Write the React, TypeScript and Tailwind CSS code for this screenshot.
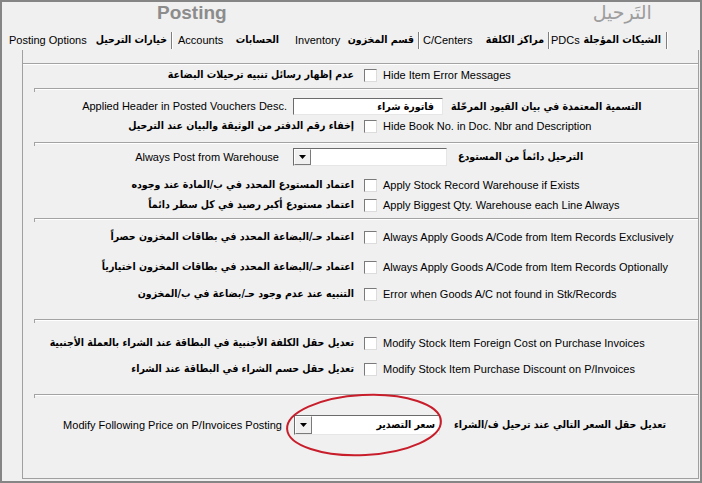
const en = "font-['Liberation_Sans','DejaVu_Sans',sans-serif] text-[11px] text-black whitespace-nowrap";
const ar = "font-['DejaVu_Sans_Condensed','DejaVu_Sans',sans-serif] font-stretch-condensed font-bold text-[10.5px] text-black whitespace-nowrap";

function Check() {
  return (
    <span className="block w-[13px] h-[13px] shrink-0 bg-white border border-t-[#7a7a7a] border-l-[#7a7a7a] border-r-[#dcdcdc] border-b-[#dcdcdc]" />
  );
}

function Etched({ full, className = "" }: { full?: boolean; className?: string }) {
  return (
    <div className={`relative h-[2px] border-t border-t-[#a3a3a3] bg-white ${full ? "" : "ml-[12px]"} ${className}`}>
      {!full && <span className="absolute -left-px -top-px w-px h-[4px] bg-[#a3a3a3]" />}
    </div>
  );
}

function CheckRow({ arText, enText, className = "" }: { arText: string; enText: string; className?: string }) {
  return (
    <div className={`flex items-center h-[16px] ${className}`}>
      <div dir="rtl" className={`w-[331px] shrink-0 text-right ${ar}`}>
        {arText}
      </div>
      <span className="ml-[10px]">
        <Check />
      </span>
      <span className={`ml-[6px] ${en}`}>{enText}</span>
    </div>
  );
}

function Combo({ value, w, h }: { value: string; w: string; h: string }) {
  return (
    <div className={`flex ${w} ${h} bg-white border border-t-[#6b6b6b] border-l-[#6b6b6b] border-r-[#e6e6e6] border-b-[#e6e6e6]`}>
      <div className="w-[17px] h-full bg-[#f0f0f0] border border-t-white border-l-white border-r-[#7a7a7a] border-b-[#7a7a7a] flex items-center justify-center">
        <svg width="7" height="4" viewBox="0 0 7 4">
          <path d="M0 0 H7 L3.5 4 Z" fill="#000" />
        </svg>
      </div>
      <div dir="rtl" className={`flex-1 flex items-center pr-[4px] ${ar}`}>
        {value}
      </div>
    </div>
  );
}

function Sep() {
  return <span className="block w-[2px] h-[17px] border-l border-l-[#7e7e7e] bg-white" />;
}

export default function App() {
  return (
    <div className="relative w-[702px] h-[483px] border-2 border-[#858585] bg-[#f0f0f0] overflow-hidden flex flex-col">
      {/* title */}
      <div className="flex h-[29px] shrink-0">
        <span className="ml-[155px] mt-[1px] font-['Liberation_Sans',sans-serif] font-bold text-[19px] leading-none text-[#8c8c8c]">
          Posting
        </span>
        <span dir="rtl" className="ml-[366px] mt-[1px] font-['DejaVu_Sans',sans-serif] text-[19px] leading-none text-[#9d9d9d]">
          التَرحيل
        </span>
      </div>

      {/* tabs */}
      <div className="flex items-center h-[19px] shrink-0">
        <div className="w-[169px] flex justify-between pl-[7px] pr-[4px]">
          <span className={en}>Posting Options</span>
          <span dir="rtl" className={ar}>خيارات الترحيل</span>
        </div>
        <Sep />
        <div className="w-[114px] flex justify-between pl-[5px] pr-[8px]">
          <span className={en}>Accounts</span>
          <span dir="rtl" className={ar}>الحسابات</span>
        </div>
        <div className="w-[131px] flex justify-between pl-[8px] pr-[4px]">
          <span className={en}>Inventory</span>
          <span dir="rtl" className={ar}>قسم المخزون</span>
        </div>
        <Sep />
        <div className="w-[128px] flex justify-between pl-[3px] pr-[4px]">
          <span className={en}>C/Centers</span>
          <span dir="rtl" className={ar}>مراكز الكلفة</span>
        </div>
        <Sep />
        <div className="w-[116px] flex justify-between pl-[1px] pr-[5px]">
          <span className={en}>PDCs</span>
          <span dir="rtl" className={ar}>الشيكات المؤجلة</span>
        </div>
        <Sep />
      </div>

      {/* panel */}
      <div className="ml-[20px] w-[677px] h-[429px] shrink-0 border-l border-r border-b border-[#a0a0a0] flex flex-col">
        <Etched full className="mt-[13px]" />
        <CheckRow className="mt-[2px]" arText="عدم إظهار رسائل تنبيه ترحيلات البضاعة" enText="Hide Item Error Messages" />

        <Etched className="mt-[5px]" />
        <div className="flex items-center h-[17px] mt-[8px]">
          <div className={`w-[264px] shrink-0 text-right ${en}`}>Applied Header in Posted Vouchers Desc.</div>
          <div dir="rtl" className={`ml-[6px] w-[150px] h-[17px] flex items-center pr-[8px] bg-white border border-t-[#6b6b6b] border-l-[#6b6b6b] border-r-[#e6e6e6] border-b-[#e6e6e6] ${ar}`}>
            فاتورة شراء
          </div>
          <span dir="rtl" className={`ml-[8px] ${ar}`}>التسمية المعتمدة في بيان القيود المرحّلة</span>
        </div>
        <CheckRow className="mt-[3px]" arText="إخفاء رقم الدفتر من الوثيقة والبيان عند الترحيل" enText="Hide Book No. in Doc. Nbr and Description" />

        <Etched className="mt-[8px]" />
        <div className="flex items-center h-[18px] mt-[4px]">
          <div className={`w-[256px] shrink-0 text-right ${en}`}>Always Post from Warehouse</div>
          <div className="ml-[14px]">
            <Combo value="" w="w-[154px]" h="h-[18px]" />
          </div>
          <span dir="rtl" className={`ml-[11px] ${ar}`}>الترحيل دائماً من المستودع</span>
        </div>
        <CheckRow className="mt-[11px]" arText="اعتماد المستودع المحدد في ب/المادة عند وجوده" enText="Apply Stock Record Warehouse if Exists" />
        <CheckRow className="mt-[4px]" arText="اعتماد مستودع أكبر رصيد في كل سطر دائماً" enText="Apply Biggest Qty. Warehouse each Line Always" />

        <Etched className="mt-[5px]" />
        <CheckRow className="mt-[9px]" arText="اعتماد حـ/البضاعة المحدد في بطاقات المخزون حصراً" enText="Always Apply Goods A/Code from Item Records Exclusively" />
        <CheckRow className="mt-[14px]" arText="اعتماد حـ/البضاعة المحدد في بطاقات المخزون اختيارياً" enText="Always Apply Goods A/Code from Item Records Optionally" />
        <CheckRow className="mt-[11px]" arText="التنبيه عند عدم وجود حـ/بضاعة في ب/المخزون" enText="Error when Goods A/C not found in Stk/Records" />

        <Etched className="mt-[17px]" />
        <CheckRow className="mt-[14px]" arText="تعديل حقل الكلفة الأجنبية في البطاقة عند الشراء بالعملة الأجنبية" enText="Modify Stock Item Foreign Cost on Purchase Invoices" />
        <CheckRow className="mt-[10px]" arText="تعديل حقل حسم الشراء في البطاقة عند الشراء" enText="Modify Stock Item Purchase Discount on P/Invoices" />

        <Etched className="mt-[17px]" />
        <div className="flex items-center h-[20px] mt-[19px]">
          <div className={`w-[259px] shrink-0 text-right ${en}`}>Modify Following Price on P/Invoices Posting</div>
          <div className="ml-[12px]">
            <Combo value="سعر التصدير" w="w-[146px]" h="h-[20px]" />
          </div>
          <span dir="rtl" className={`ml-[14px] ${ar}`}>تعديل حقل السعر التالي عند ترحيل ف/الشراء</span>
        </div>
      </div>

      {/* red highlight */}
      <svg className="absolute left-[278px] top-[386px]" width="170" height="76" viewBox="0 0 170 76">
        <ellipse cx="84" cy="37" rx="77" ry="30" fill="none" stroke="#c81e2b" strokeWidth="2" transform="rotate(-3 84 37)" />
      </svg>
    </div>
  );
}
